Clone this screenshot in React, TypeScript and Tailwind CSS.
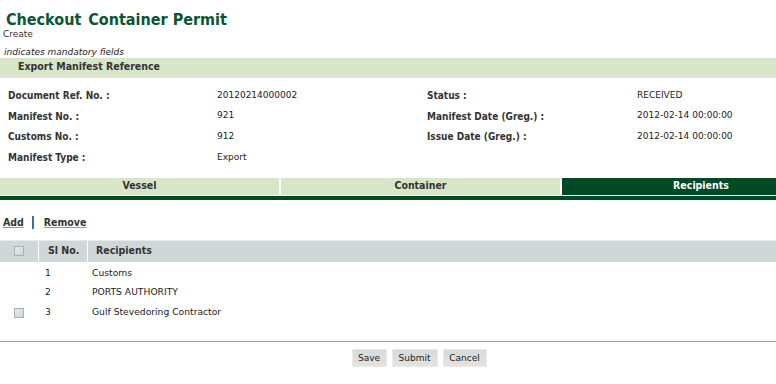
import React from "react";

const font = { fontFamily: '"DejaVu Sans", Verdana, sans-serif' };
const cond = { fontFamily: '"DejaVu Sans Condensed", "DejaVu Sans", Verdana, sans-serif' };

function Box() {
  return (
    <span className="inline-block w-[10px] h-[10px] border border-[#a9b1b1] bg-gradient-to-br from-[#e9ecec] to-[#cfd6d6]" />
  );
}

function Row({ l, v, l2, v2 }: { l: string; v: string; l2?: string; v2?: string }) {
  return (
    <div className="flex h-[20.7px] items-center">
      <div className="w-[217px] pl-[8px] font-bold text-[10px] text-[#333]" style={cond}>{l}</div>
      <div className="w-[210px] text-[9px] text-[#222]">{v}</div>
      <div className="w-[210px] font-bold text-[10px] text-[#333]" style={cond}>{l2}</div>
      <div className="flex-1 text-[9px] text-[#222]">{v2}</div>
    </div>
  );
}

export default function App() {
  return (
    <div className="w-[776px] h-[384px] bg-white overflow-hidden" style={font}>
      <div className="pt-[10px] pl-[6px] text-[16px] font-bold text-[#0b5530] leading-[19px]" style={cond}>
        Checkout <span className="ml-[2px]">Container Permit</span>
      </div>
      <div className="pl-[3px] text-[9px] leading-[11px] text-[#333]">Create</div>
      <div className="pl-[4px] mt-[7px] text-[9px] italic leading-[11px] text-[#222]">indicates mandatory fields</div>
      <div className="h-[20px] bg-[#d6e6c6] flex items-center pl-[18px] font-bold text-[10.5px] text-[#333] border-b-2 border-[#e0e0e0]" style={cond}>
        Export Manifest Reference
      </div>
      <div className="pt-[7px]">
        <Row l="Document Ref. No. :" v="20120214000002" l2="Status :" v2="RECEIVED" />
        <Row l="Manifest No. :" v="921" l2="Manifest Date (Greg.) :" v2="2012-02-14 00:00:00" />
        <Row l="Customs No. :" v="912" l2="Issue Date (Greg.) :" v2="2012-02-14 00:00:00" />
        <Row l="Manifest Type :" v="Export" />
      </div>
      <div className="mt-[10px] flex h-[17px] gap-[2px] text-[10.5px] font-bold" style={cond}>
        <div className="w-[279px] bg-[#d6e6c6] flex items-center justify-center text-[#333]">Vessel</div>
        <div className="w-[279px] bg-[#d6e6c6] flex items-center justify-center text-[#333]">Container</div>
        <div className="flex-1 bg-[#004a25] flex items-center justify-center pl-[64px] text-white">Recipients</div>
      </div>
      <div className="mt-[1px] h-[4px] bg-[#004a25]" />
      <div className="mt-[17px] flex items-center h-[12px] text-[10.5px] font-bold text-[#333]" style={cond}>
        <span className="pl-[3px] underline decoration-[#7fa67f]">Add</span>
        <span className="ml-[8px] w-[2px] h-[13px] bg-[#3a6ea5]" />
        <span className="ml-[10px] underline decoration-[#7fa67f]">Remove</span>
      </div>
      <div className="mt-[11px] h-[22px] bg-[#cfd8d8] flex items-stretch text-[10.5px] font-bold text-[#333] border-t border-[#e6eaea]" style={cond}>
        <div className="w-[39px] flex items-center justify-center border-r border-white"><Box /></div>
        <div className="w-[49px] flex items-center pl-[9px] border-r border-white">Sl No.</div>
        <div className="flex items-center pl-[8px]">Recipients</div>
      </div>
      <div className="pt-[1px] text-[9.2px] text-[#222]">
        {[
          ["1", "Customs", false],
          ["2", "PORTS AUTHORITY", false],
          ["3", "Gulf Stevedoring Contractor", true],
        ].map(([n, name, cb]) => (
          <div key={n as string} className="flex items-center h-[19.5px]">
            <div className="w-[39px] flex items-center pl-[14px] pt-[2px]">{cb ? <Box /> : null}</div>
            <div className="w-[53px] pl-[6px]">{n}</div>
            <div>{name}</div>
          </div>
        ))}
      </div>
      <div className="mt-[20px] border-t border-[#95aaa6]" />
      <div className="mt-[7px] flex justify-center gap-[5px] pl-[62px] text-[9px] text-[#222]">
        {[
          ["Save", "w-[35px]"],
          ["Submit", "w-[46px]"],
          ["Cancel", "w-[44px]"],
        ].map(([b, w]) => (
          <button key={b} className={`${w} h-[18px] bg-gradient-to-b from-[#d3dcdc] to-[#e6e2dc] border border-[#e8ebeb]`}>
            {b}
          </button>
        ))}
      </div>
    </div>
  );
}
